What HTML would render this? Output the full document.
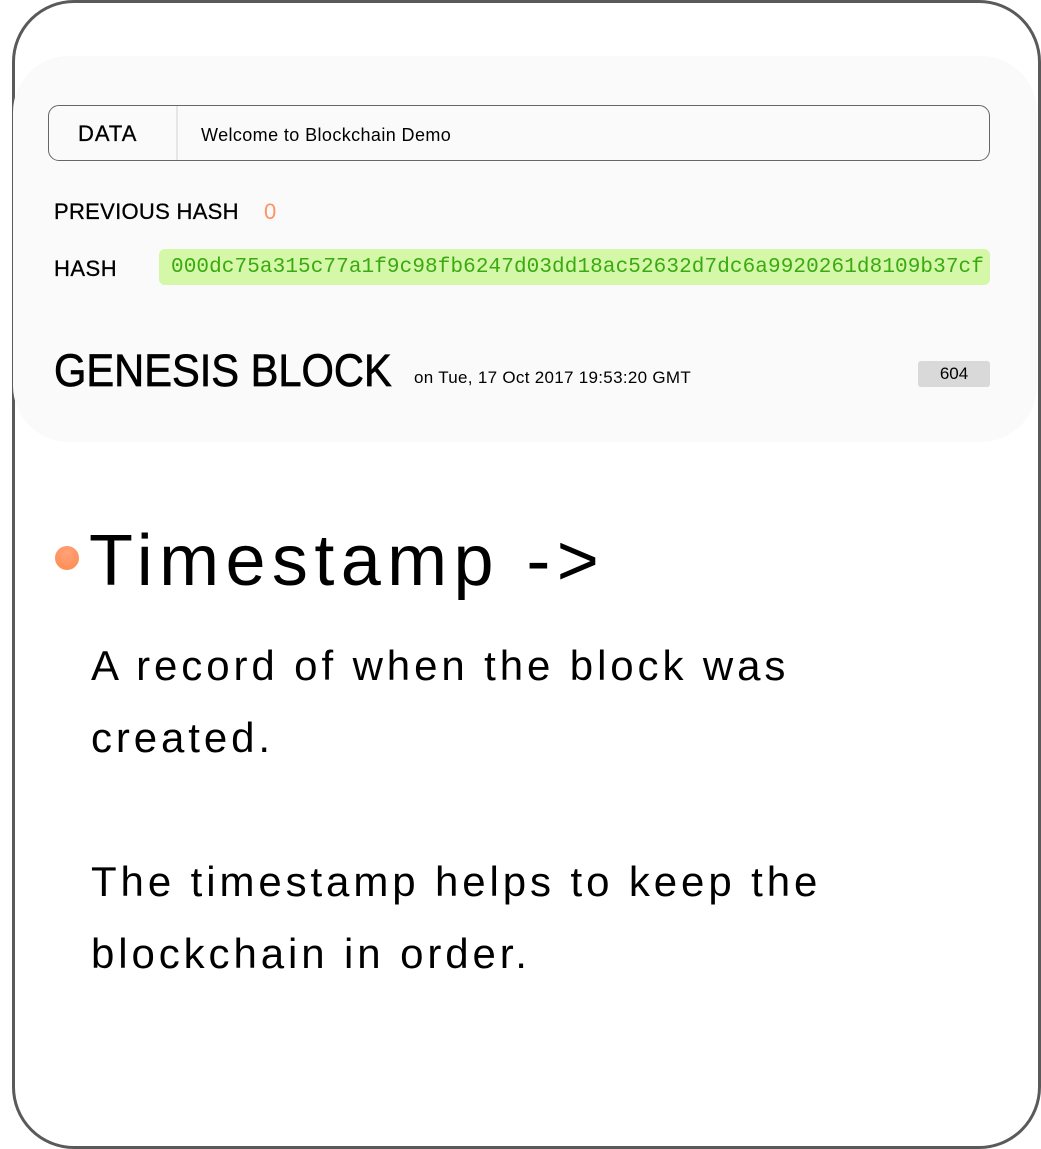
<!DOCTYPE html>
<html><head><meta charset="utf-8"><style>
*{margin:0;padding:0;box-sizing:border-box}
body{width:1041px;height:1149px;background:#fff;font-family:"Liberation Sans",sans-serif;position:relative;overflow:hidden;color:#000}
.outer{position:absolute;left:12px;top:0;width:1029px;height:1149px;border:3px solid #5a5a5a;border-radius:62px;overflow:hidden}
.card{position:absolute;left:0;top:56px;width:1024px;height:386px;background:#fafafa;border-radius:56px}
.abs{position:absolute;white-space:nowrap}
.data{left:48px;top:105px;width:942px;height:56px;border:1px solid #666;border-radius:11px}
.div{left:176px;top:106px;width:2px;height:54px;background:#e6e6e6}
.hash{left:159px;top:249px;width:831px;height:36px;background:#d5f7a8;border-radius:6px;color:#3aaa10;font-family:"Liberation Mono",monospace;font-size:21px;line-height:38px;padding-left:12px;letter-spacing:0.1px}
.badge{left:918px;top:361px;width:72px;height:26px;background:#d9d9d9;border-radius:3px;font-size:17px;line-height:26px;text-align:center}
.dot{left:55px;top:546px;width:24px;height:24px;border-radius:50%;background:radial-gradient(circle at 50% 30%,#ffa27a,#ff8a4a)}
</style></head><body>
<div class="outer"></div>
<div class="card" style="left:13px"></div>
<div class="abs data"></div>
<div class="abs div"></div>
<div class="abs" style="left:78px;top:121px;font-size:22px;letter-spacing:1px;-webkit-text-stroke:0.3px #000">DATA</div>
<div class="abs" style="left:201px;top:125px;font-size:18px;letter-spacing:0.4px">Welcome to Blockchain Demo</div>
<div class="abs" style="left:54px;top:199px;font-size:22px;letter-spacing:0.3px;-webkit-text-stroke:0.3px #000">PREVIOUS HASH</div>
<div class="abs" style="left:264px;top:199px;font-size:22px;color:#ff9363">0</div>
<div class="abs" style="left:54px;top:256px;font-size:22px;letter-spacing:0.5px;-webkit-text-stroke:0.3px #000">HASH</div>
<div class="abs hash">000dc75a315c77a1f9c98fb6247d03dd18ac52632d7dc6a9920261d8109b37cf</div>
<div class="abs" style="left:54px;top:345px;font-size:45px;transform:scaleX(0.925);transform-origin:left;-webkit-text-stroke:0.7px #000">GENESIS BLOCK</div>
<div class="abs" style="left:414px;top:368px;font-size:17px;letter-spacing:0.3px">on Tue, 17 Oct 2017 19:53:20 GMT</div>
<div class="abs badge">604</div>
<div class="abs dot"></div>
<div class="abs" style="left:89px;top:520px;font-size:72px;letter-spacing:6.4px">Timestamp -&gt;</div>
<div class="abs" style="left:91px;top:630px;font-size:42px;line-height:72px;letter-spacing:3.9px">A record of when the block was<br>created.<br><br>The timestamp helps to keep the<br>blockchain in order.</div>
</body></html>
